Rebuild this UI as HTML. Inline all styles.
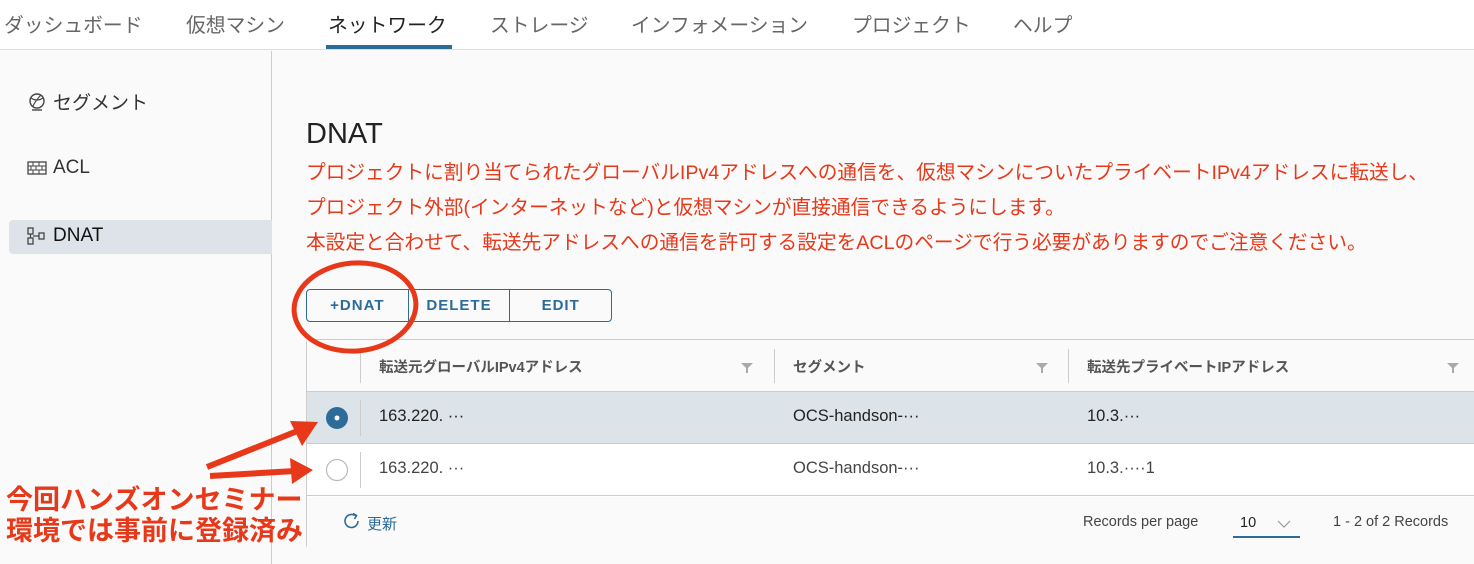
<!DOCTYPE html>
<html><head><meta charset="utf-8">
<style>
*{box-sizing:border-box;margin:0;padding:0}
body{width:1474px;height:564px;overflow:hidden;background:#fafafa;font-family:"Liberation Sans","Noto Sans CJK JP",sans-serif;color:#333;position:relative}
.top{position:absolute;left:0;top:0;width:1474px;height:50px;background:#fff;border-bottom:1px solid #ddd}
.top span{position:absolute;top:9px;font-size:19.8px;color:#666}
.top .act{color:#222}
.ul{position:absolute;left:326px;top:45px;width:126px;height:4px;background:#2d6b98}
.side{position:absolute;left:0;top:51px;width:272px;height:513px;border-right:1px solid #ccc;background:#fafafa}
.si{position:absolute;left:27px;font-size:19px;color:#333;display:flex;align-items:center}
.sel{position:absolute;left:9px;top:169px;width:263px;height:34px;background:#dde3e8;border-radius:4px 0 0 4px}
h1{position:absolute;left:306px;top:118px;font-size:29px;font-weight:normal;color:#222}
.red{position:absolute;left:306px;font-size:19.7px;color:#e8381a;white-space:nowrap}
.btns{position:absolute;left:306px;top:289px;width:306px;height:33px;border:1px solid #2d6b98;border-radius:4px;display:flex}
.btns div{flex:1;display:flex;align-items:center;justify-content:center;color:#2d6b98;font-weight:bold;font-size:15px;letter-spacing:1px}
.btns div+div{border-left:1px solid #2d6b98}
.tbl{position:absolute;left:306px;top:339px;width:1180px;height:210px;border:1px solid #ccc;border-radius:4px;background:#fff}
.hd{position:absolute;left:0;top:0;width:100%;height:52px;background:#fafafa;border-bottom:1px solid #ccc}
.hc{position:absolute;top:16px;font-size:14.5px;font-weight:bold;color:#555}
.vs{position:absolute;width:1px;background:#ccc}
.r1{position:absolute;left:0;top:52px;width:100%;height:52px;background:#dce3e9;border-bottom:1px solid #ccc}
.r2{position:absolute;left:0;top:104px;width:100%;height:52px;background:#fff;border-bottom:1px solid #ccc}
.cell{position:absolute;top:15px;font-size:16.5px;color:#222}
.ft{position:absolute;left:0;top:157px;width:100%;height:52px;background:#fafafa}
.ann{position:absolute;left:6px;font-size:27px;font-weight:bold;color:#e8381a;white-space:nowrap}
</style></head><body>
<div class="top">
<span style="left:4px">ダッシュボード</span>
<span style="left:186px">仮想マシン</span>
<span class="act" style="left:328px">ネットワーク</span>
<span style="left:490px">ストレージ</span>
<span style="left:631px">インフォメーション</span>
<span style="left:852px">プロジェクト</span>
<span style="left:1013px">ヘルプ</span>
<div class="ul"></div>
</div>
<div class="side">
<div class="sel"></div>
<div class="si" style="top:37px"><svg width="20" height="20" viewBox="0 0 20 20" style="margin-right:6px"><circle cx="10" cy="9" r="7" fill="none" stroke="#444" stroke-width="1.4"/><path d="M4 6 Q10 10 16 6 M6 14 Q9 8 14 3" fill="none" stroke="#444" stroke-width="1.2"/><line x1="5" y1="18" x2="15" y2="18" stroke="#444" stroke-width="1.4"/></svg>セグメント</div>
<div class="si" style="top:106px"><svg width="20" height="16" viewBox="0 0 20 16" style="margin-right:6px"><rect x="1" y="2" width="18" height="12" fill="none" stroke="#444" stroke-width="1.3"/><path d="M1 6H19M1 10H19M6 2V6M12 2V6M9 6V10M15 6V10M4 6V10M6 10V14M12 10V14" stroke="#444" stroke-width="1"/></svg>ACL</div>
<div class="si" style="top:174px;color:#111"><svg width="20" height="20" viewBox="0 0 20 20" style="margin-right:6px"><rect x="1" y="2" width="5" height="6" fill="none" stroke="#444" stroke-width="1.3"/><rect x="1" y="12" width="5" height="6" fill="none" stroke="#444" stroke-width="1.3"/><rect x="12" y="7" width="5" height="6" fill="none" stroke="#444" stroke-width="1.3"/><path d="M6 10H12M3.5 8V12" stroke="#444" stroke-width="1.2"/></svg>DNAT</div>
</div>
<h1>DNAT</h1>
<div class="red" style="top:156px">プロジェクトに割り当てられたグローバルIPv4アドレスへの通信を、仮想マシンについたプライベートIPv4アドレスに転送し、</div>
<div class="red" style="top:191px">プロジェクト外部(インターネットなど)と仮想マシンが直接通信できるようにします。</div>
<div class="red" style="top:226px">本設定と合わせて、転送先アドレスへの通信を許可する設定をACLのページで行う必要がありますのでご注意ください。</div>
<div class="btns"><div>+DNAT</div><div>DELETE</div><div>EDIT</div></div>
<div class="tbl">
<div class="hd">
<div class="vs" style="left:53px;top:9px;height:34px"></div>
<div class="hc" style="left:72px">転送元グローバルIPv4アドレス</div>
<div class="vs" style="left:467px;top:9px;height:34px"></div>
<div class="hc" style="left:486px">セグメント</div>
<div class="vs" style="left:761px;top:9px;height:34px"></div>
<div class="hc" style="left:780px">転送先プライベートIPアドレス</div>
<svg style="position:absolute;left:434px;top:22px" width="12" height="12"><path d="M0 1H12L7 6V11H5V6Z" fill="#aaa"/></svg>
<svg style="position:absolute;left:729px;top:22px" width="12" height="12"><path d="M0 1H12L7 6V11H5V6Z" fill="#aaa"/></svg>
<svg style="position:absolute;left:1140px;top:22px" width="12" height="12"><path d="M0 1H12L7 6V11H5V6Z" fill="#aaa"/></svg>
</div>
<div class="r1">
<svg style="position:absolute;left:18px;top:14px" width="24" height="24"><circle cx="12" cy="12" r="11" fill="#2d6b98"/><circle cx="12" cy="12" r="2.5" fill="#fff"/></svg>
<div class="vs" style="left:53px;top:8px;height:36px"></div>
<div class="cell" style="left:72px">163.220. ···</div>
<div class="cell" style="left:486px">OCS-handson-···</div>
<div class="cell" style="left:780px">10.3.···</div>
</div>
<div class="r2">
<svg style="position:absolute;left:18px;top:14px" width="24" height="24"><circle cx="12" cy="12" r="10.5" fill="#fff" stroke="#bbb" stroke-width="1.2"/></svg>
<div class="vs" style="left:53px;top:8px;height:36px"></div>
<div class="cell" style="left:72px;color:#444">163.220. ···</div>
<div class="cell" style="left:486px;color:#444">OCS-handson-···</div>
<div class="cell" style="left:780px;color:#444">10.3.····1</div>
</div>
<div class="ft">
<svg style="position:absolute;left:36px;top:15px" width="18" height="18" viewBox="0 0 18 18"><path d="M15 9A6.5 6.5 0 1 1 12 3.5" fill="none" stroke="#2d6b98" stroke-width="1.6"/><path d="M10 1.5L13.5 3.5L11.5 7" fill="none" stroke="#2d6b98" stroke-width="1.6"/></svg>
<div style="position:absolute;left:60px;top:16px;font-size:15px;color:#2d6b98">更新</div>
<div style="position:absolute;left:776px;top:17px;font-size:14.5px;color:#444">Records per page</div>
<div style="position:absolute;left:933px;top:18px;font-size:14.5px;color:#222">10</div>
<svg style="position:absolute;left:970px;top:22px" width="14" height="10"><path d="M1 2L7 8L13 2" fill="none" stroke="#999" stroke-width="1.2"/></svg>
<div style="position:absolute;left:926px;top:39px;width:67px;height:2px;background:#2d6b98"></div>
<div style="position:absolute;left:1026px;top:17px;font-size:14.5px;color:#444">1 - 2 of 2 Records</div>
</div>
</div>
<div class="ann" style="top:478px">今回ハンズオンセミナー</div>
<div class="ann" style="top:509px">環境では事前に登録済み</div>
<svg style="position:absolute;left:0;top:0" width="1474" height="564">
<ellipse cx="355" cy="307" rx="61" ry="44" fill="none" stroke="#e8381a" stroke-width="5" transform="rotate(-5 355 307)"/>
<path d="M207 467L300 430" stroke="#e8381a" stroke-width="6"/>
<path d="M318 422L290 421L302 446Z" fill="#e8381a"/>
<path d="M210 476L295 471" stroke="#e8381a" stroke-width="6"/>
<path d="M313 470L290 458L292 484Z" fill="#e8381a"/>
</svg>
</body></html>
